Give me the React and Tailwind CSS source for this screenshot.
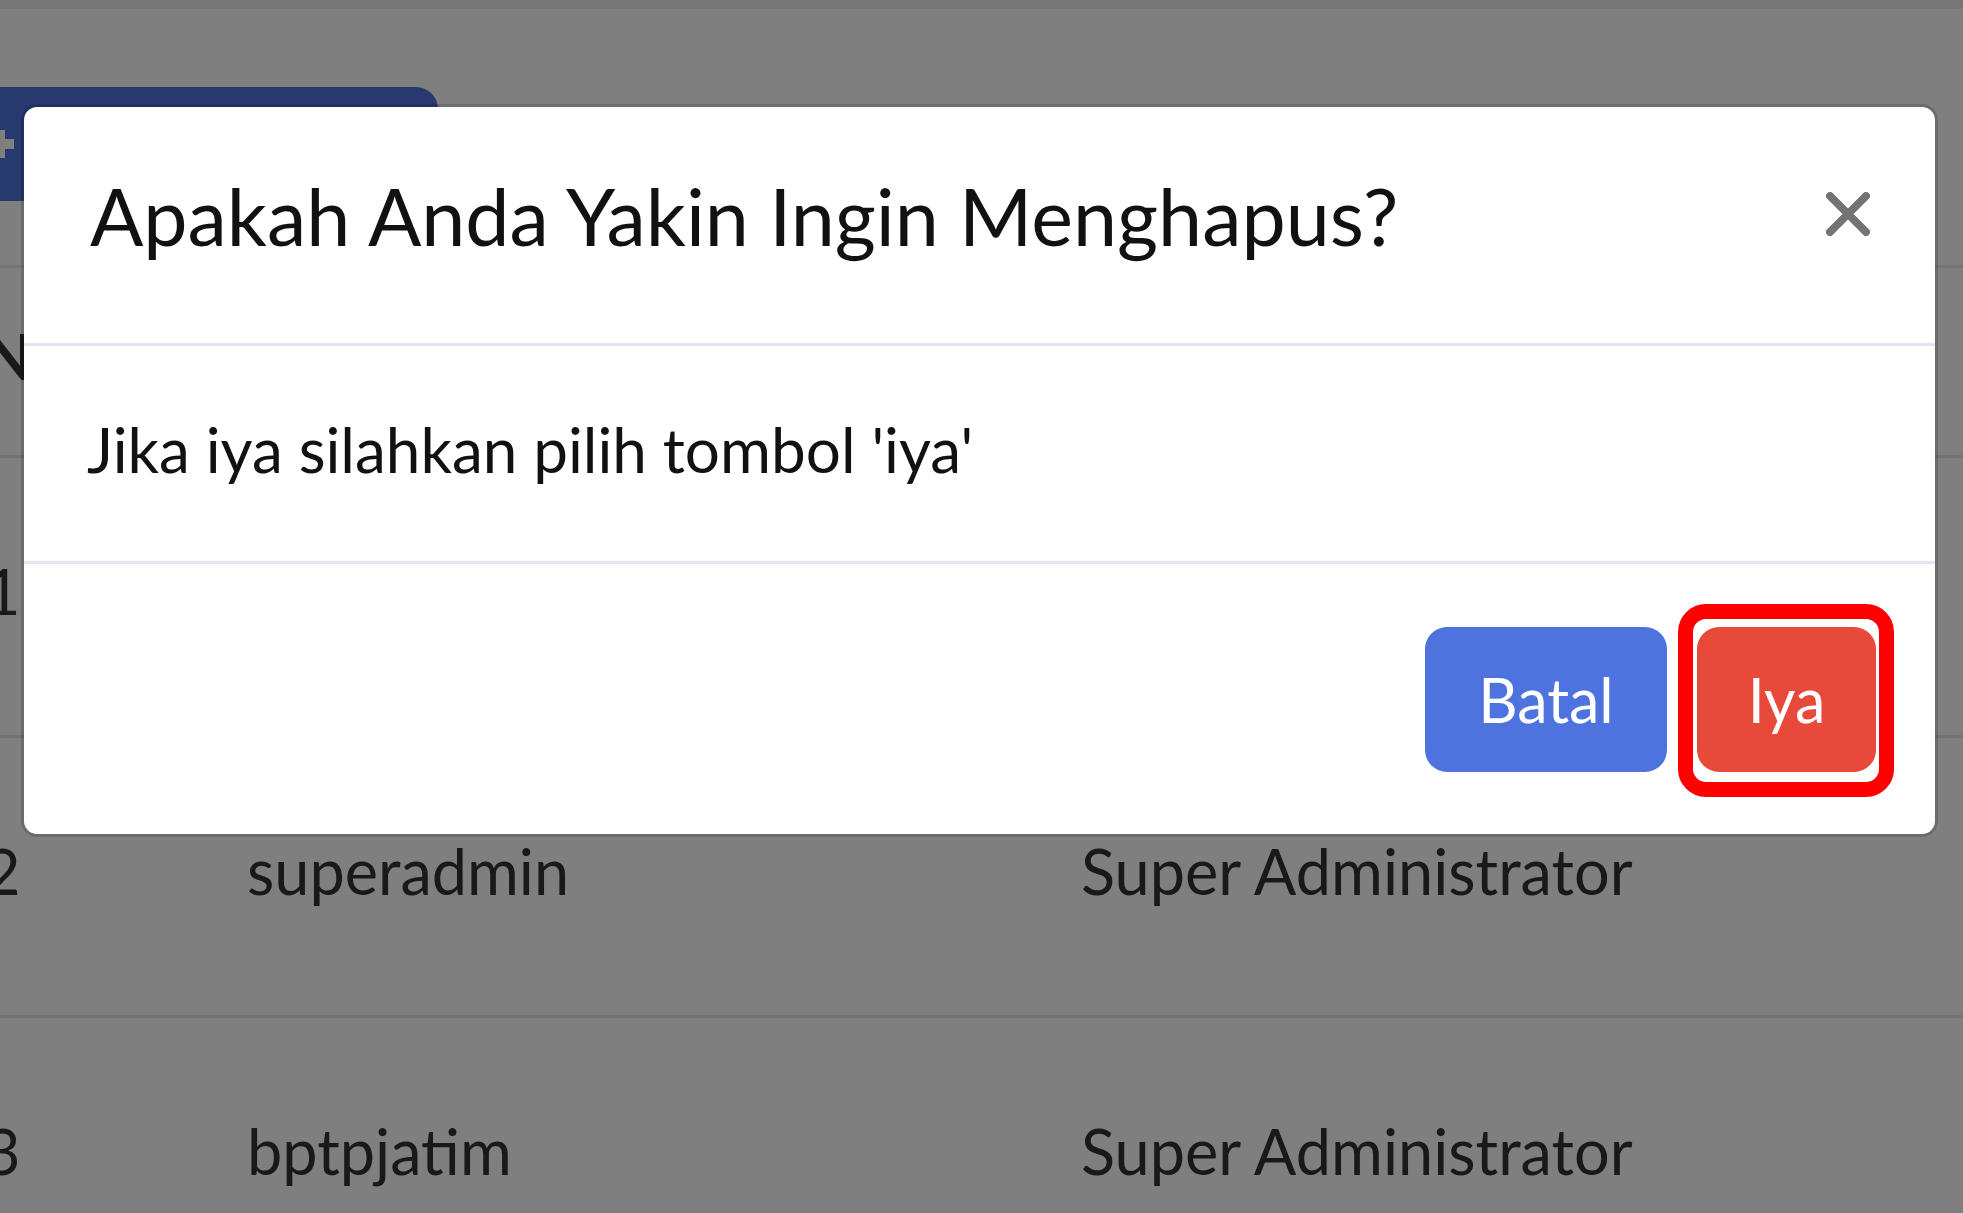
import React from 'react';

const FONT = { fontFamily: 'Lato, "Noto Sans", sans-serif' };

function CloseIcon() {
  return (
    <svg width="44" height="44" viewBox="0 0 44 44" className="shrink-0 -mt-[22px]" aria-label="Tutup">
      <path d="M4 4L40 40M40 4L4 40" stroke="#737373" strokeWidth="8" strokeLinecap="round" fill="none" />
    </svg>
  );
}

function TableRow({ cells, height, bold }) {
  return (
    <div
      className={`grid grid-cols-[263px_834px_1fr] items-center border-t-[3px] border-[#e3e6f0] ${height} ${bold ? 'font-bold' : ''}`}
    >
      {cells.map((c, i) => (
        <div key={i} className="whitespace-nowrap mb-[10px]">
          {c}
        </div>
      ))}
    </div>
  );
}

export default function App() {
  return (
    <div className="relative w-[1963px] h-[1213px] overflow-hidden bg-white" style={FONT}>
      {/* page behind the modal */}
      <div className="h-[9px] bg-[#ececec]" />
      <div className="pt-[78px]">
        <div className="ml-[-40px] w-[478px] h-[114px] rounded-[22px] bg-[#4e73df] flex items-center pl-[22px]">
          <svg width="36" height="36" viewBox="0 0 36 36">
            <path d="M18 4v28M4 18h28" stroke="#ffffff" strokeWidth="10" fill="none" />
          </svg>
        </div>
      </div>
      <div className="mt-[64px] ml-[-16px] text-[63px] text-[#333333]">
        <TableRow cells={['No', '', '']} height="h-[190px]" bold />
        <TableRow cells={['1', '', '']} height="h-[280px]" />
        <TableRow cells={['2', 'superadmin', 'Super Administrator']} height="h-[280px]" />
        <TableRow cells={['3', 'bptpjatim', 'Super Administrator']} height="h-[280px]" />
      </div>

      {/* backdrop */}
      <div className="absolute inset-0 bg-black/50" />

      {/* modal */}
      <div className="absolute left-[21px] top-[104px] w-[1917px] h-[733px] rounded-[16px] border-[3px] border-black/15 bg-white bg-clip-padding flex flex-col text-[#111111]">
        <div className="h-[239px] border-b-[3px] border-[#e3e6f0] pl-[66px] pr-[65px] flex items-center justify-between">
          <h5 className="text-[79px] leading-[1.5] font-normal mb-[18px]">Apakah Anda Yakin Ingin Menghapus?</h5>
          <CloseIcon />
        </div>
        <div className="h-[218px] border-b-[3px] border-[#e3e6f0] pl-[63px] pr-[66px] flex items-center">
          <p className="text-[62px] leading-[1.5] mb-[8px]">Jika iya silahkan pilih tombol 'iya'</p>
        </div>
        <div className="flex-1 flex items-center justify-end gap-[30px] pr-[59px]">
          <button className="w-[242px] h-[145px] rounded-[22px] bg-[#4e73df] text-white text-[61px] leading-none">
            Batal
          </button>
          <div className="relative">
            <button className="w-[179px] h-[145px] rounded-[22px] bg-[#e74a3b] text-white text-[61px] leading-none">
              Iya
            </button>
            <div className="absolute -left-[19px] -right-[18px] -top-[23px] -bottom-[25px] border-[15px] border-[#ff0000] rounded-[28px]" />
          </div>
        </div>
      </div>
    </div>
  );
}
